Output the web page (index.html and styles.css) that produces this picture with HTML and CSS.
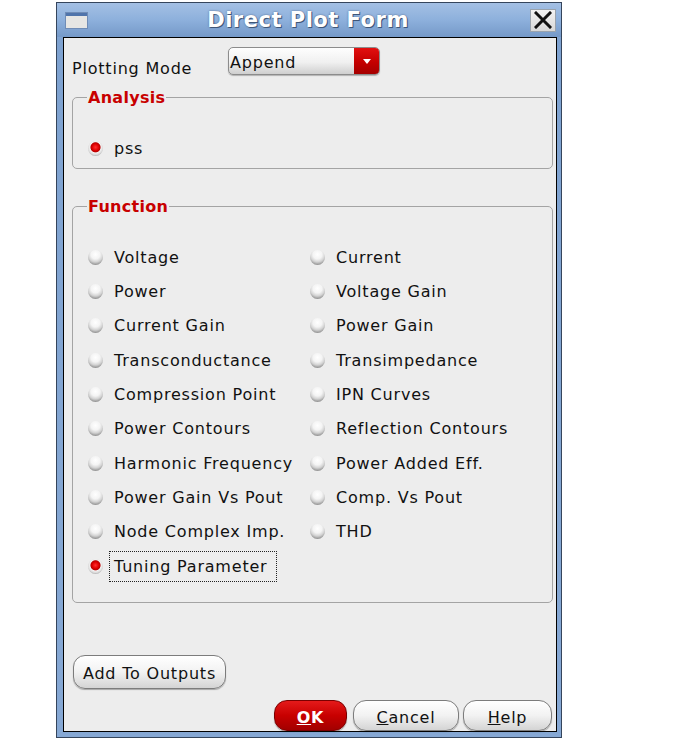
FILE: index.html
```html
<!DOCTYPE html>
<html lang="en">
<head>
    <meta charset="UTF-8">
    <meta name="viewport" content="width=device-width, initial-scale=1.0">
    <title>Direct Plot Form</title>
    <link rel="stylesheet" href="styles.css">
</head>
<body>
    <div class="window">
        <!-- Title bar -->
        <div class="titlebar">
            <span class="win-icon"><span class="win-icon-bar"></span></span>
            <span class="title">Direct Plot Form</span>
            <span class="close-btn">
                <svg width="18" height="18" viewBox="0 0 18 18">
                    <path d="M2 2 L16 16 M16 2 L2 16" stroke="#111" stroke-width="3" stroke-linecap="square"/>
                </svg>
            </span>
        </div>

        <div class="content">
            <!-- Plotting mode -->
            <div class="mode-row">
                <span class="mode-label">Plotting Mode</span>
                <div class="select">
                    <span class="select-value">Append</span>
                    <span class="select-arrow"><span class="tri"></span></span>
                </div>
            </div>

            <!-- Analysis -->
            <fieldset class="group analysis">
                <legend>Analysis</legend>
                <div class="option"><span class="radio on"></span><span class="opt-text">pss</span></div>
            </fieldset>

            <!-- Function -->
            <fieldset class="group function">
                <legend>Function</legend>
                <div class="option-grid">
                    <div class="option"><span class="radio"></span><span class="opt-text">Voltage</span></div>
                    <div class="option"><span class="radio"></span><span class="opt-text">Current</span></div>
                    <div class="option"><span class="radio"></span><span class="opt-text">Power</span></div>
                    <div class="option"><span class="radio"></span><span class="opt-text">Voltage Gain</span></div>
                    <div class="option"><span class="radio"></span><span class="opt-text">Current Gain</span></div>
                    <div class="option"><span class="radio"></span><span class="opt-text">Power Gain</span></div>
                    <div class="option"><span class="radio"></span><span class="opt-text">Transconductance</span></div>
                    <div class="option"><span class="radio"></span><span class="opt-text">Transimpedance</span></div>
                    <div class="option"><span class="radio"></span><span class="opt-text">Compression Point</span></div>
                    <div class="option"><span class="radio"></span><span class="opt-text">IPN Curves</span></div>
                    <div class="option"><span class="radio"></span><span class="opt-text">Power Contours</span></div>
                    <div class="option"><span class="radio"></span><span class="opt-text">Reflection Contours</span></div>
                    <div class="option"><span class="radio"></span><span class="opt-text">Harmonic Frequency</span></div>
                    <div class="option"><span class="radio"></span><span class="opt-text">Power Added Eff.</span></div>
                    <div class="option"><span class="radio"></span><span class="opt-text">Power Gain Vs Pout</span></div>
                    <div class="option"><span class="radio"></span><span class="opt-text">Comp. Vs Pout</span></div>
                    <div class="option"><span class="radio"></span><span class="opt-text">Node Complex Imp.</span></div>
                    <div class="option"><span class="radio"></span><span class="opt-text">THD</span></div>
                    <div class="option"><span class="radio on"></span><span class="opt-text focused">Tuning Parameter</span></div>
                </div>
            </fieldset>

            <button class="btn add-btn">Add To Outputs</button>

            <!-- Dialog buttons -->
            <div class="footer">
                <button class="btn ok-btn"><u>O</u>K</button>
                <button class="btn cancel-btn"><u>C</u>ancel</button>
                <button class="btn help-btn"><u>H</u>elp</button>
            </div>
        </div>
    </div>
</body>
</html>
```

FILE: styles.css
```css
body { margin: 0; padding: 0; background: #ffffff; font-family: "DejaVu Sans", sans-serif; }

/* Outer window frame */
.window {
    box-sizing: border-box;
    width: 506px;
    height: 736px;
    margin: 2px 0 0 56px;
    border: 1px solid #35455c;
    background: linear-gradient(#9dbbe0, #7ea2d0 5%, #86a8d4 100%);
    display: flex;
    flex-direction: column;
}

/* Title bar */
.titlebar {
    height: 34px;
    display: flex;
    align-items: center;
    background: linear-gradient(#a4c0e4, #8db0dc 50%, #7599c8);
}
.win-icon {
    box-sizing: border-box;
    width: 23px;
    height: 17px;
    margin-left: 8px;
    border: 1px solid #6f8cb6;
    background: #e6e6e4;
    display: flex;
    flex-direction: column;
}
.win-icon-bar { height: 3px; background: #4f74ab; }
.title {
    flex: 1;
    text-align: center;
    color: #ffffff;
    font-size: 21px;
    font-weight: bold;
    letter-spacing: 0.5px;
    margin-left: -2px;
    text-shadow: 1px 1px 0 #3f5678, 0 0 2px #4b6388;
}
.close-btn {
    box-sizing: border-box;
    width: 26px;
    height: 23px;
    margin-right: 5px;
    border: 1px solid #9aa3ad;
    background: linear-gradient(#f2f2f2, #d8d8d8);
    display: flex;
    align-items: center;
    justify-content: center;
}

/* Dialog body */
.content {
    box-sizing: border-box;
    width: 494px;
    height: 695px;
    margin: 0 4px 0 6px;
    border: 1px solid #000000;
    background: #ededed;
    padding: 0 3px 0 8px;
    display: flex;
    flex-direction: column;
    color: #111111;
    font-size: 16px;
    letter-spacing: 0.8px;
}

.mode-row { display: flex; margin-top: 9px; height: 28px; }
.mode-label { width: 156px; padding-top: 11px; line-height: 22px; }

.select {
    box-sizing: border-box;
    width: 152px;
    height: 28px;
    display: flex;
    border: 1px solid #8c8c8c;
    border-radius: 5px;
    overflow: hidden;
    background: linear-gradient(#fefefe, #f0f0f0 55%, #cfcfcf);
    box-shadow: 0 1px 1px rgba(0, 0, 0, 0.25);
}
.select-value { flex: 1; padding: 2px 0 0 1px; line-height: 26px; }
.select-arrow {
    width: 25px;
    background: linear-gradient(#e21010, #c40000 55%, #a50000);
    display: flex;
    align-items: center;
    justify-content: center;
}
.tri {
    width: 0;
    height: 0;
    border-left: 4px solid transparent;
    border-right: 4px solid transparent;
    border-top: 5px solid #ffffff;
}

/* Group boxes */
.group {
    margin: 0;
    padding: 0 15px;
    border: 1px solid #a4a4a4;
    border-radius: 5px;
}
.group legend {
    margin-left: -1px;
    padding: 0 1px;
    line-height: 19px;
    color: #c80000;
    font-weight: bold;
    letter-spacing: 0.3px;
}
.analysis { margin-top: 13px; padding-top: 31px; padding-bottom: 10px; }
.function { margin-top: 28px; padding-top: 24px; padding-bottom: 19px; }

.option-grid {
    display: grid;
    grid-template-columns: 222px 1fr;
    grid-auto-rows: 34.33px;
}
.option { display: flex; align-items: center; height: 20px; }
.option-grid .option { height: auto; }
.opt-text { margin-left: 11px; }
.opt-text.focused {
    margin-left: 6px;
    padding: 0 8px 0 4px;
    line-height: 29px;
    border: 1px dotted #222222;
}

/* Radio buttons */
.radio {
    width: 15px;
    height: 15px;
    border-radius: 50%;
    flex: none;
    background: radial-gradient(circle at 50% 30%, #ffffff 0, #f4f4f4 35%, #d2d2d2 58%, #929292 80%, #747474 100%);
}
.radio.on {
    background: radial-gradient(circle at 50% 42%, #ff3030 0, #e00000 28%, #b80000 40%, #f3f3f3 48%, #dadada 64%, #939393 84%, #777777 100%);
}

/* Buttons */
.btn {
    box-sizing: border-box;
    font-family: "DejaVu Sans", sans-serif;
    font-size: 16px;
    letter-spacing: 0.8px;
    color: #111111;
    border: 1px solid #7c7c7c;
    border-radius: 12px;
    background: linear-gradient(#ffffff, #f2f2f2 50%, #d4d4d4);
    box-shadow: 0 1px 1px rgba(0, 0, 0, 0.3);
    padding: 0;
}
.add-btn { width: 153px; height: 34px; margin: 52px 0 0 1px; padding-top: 2px; }

.footer {
    display: flex;
    justify-content: flex-end;
    margin-top: 11px;
    padding-right: 1px;
}
.footer .btn { height: 31px; border-radius: 13px; padding-top: 3px; }
.ok-btn {
    width: 73px;
    color: #ffffff;
    font-weight: bold;
    border-color: #7a0000;
    background: linear-gradient(#e41a1a, #c80000 50%, #a20000);
}
.cancel-btn { width: 106px; margin-left: 6px; }
.help-btn { width: 89px; margin-left: 4px; }
```
